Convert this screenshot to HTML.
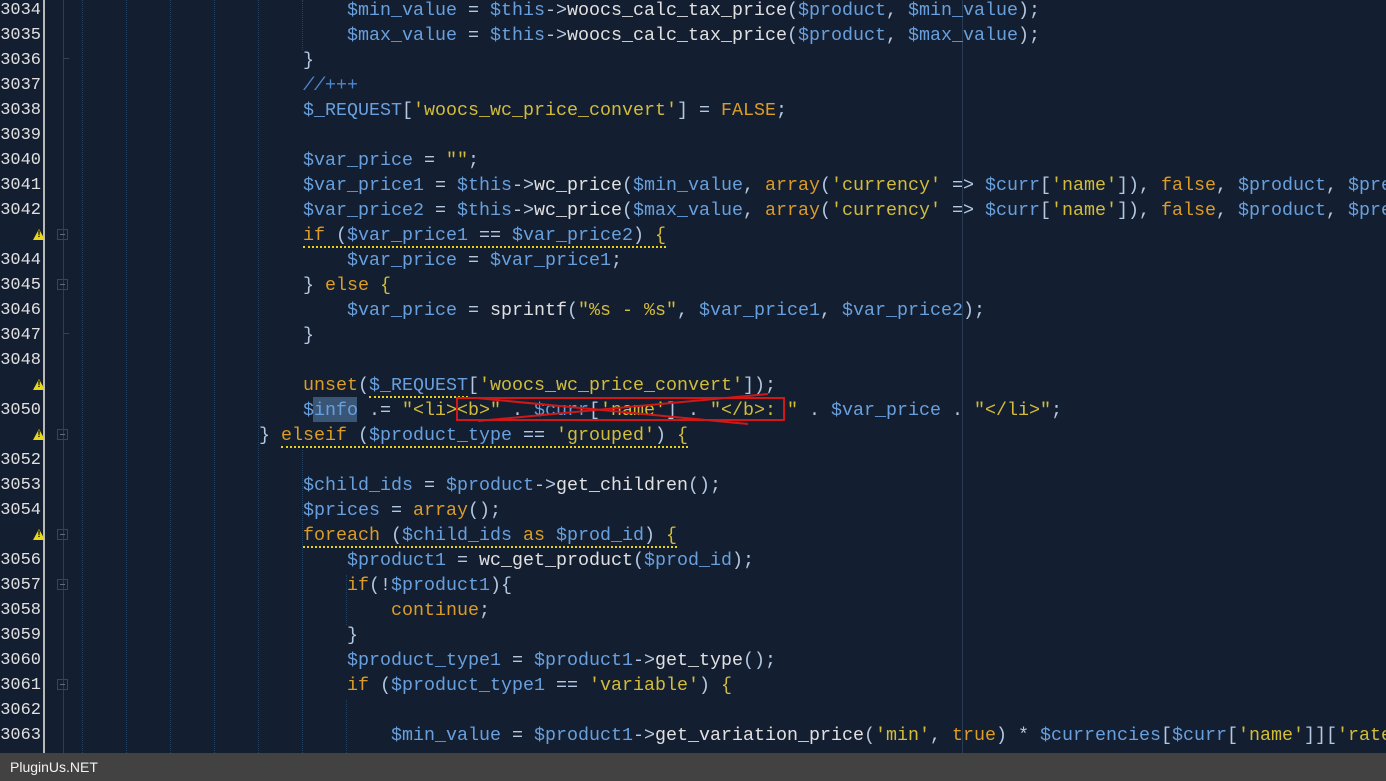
<!DOCTYPE html>
<html><head><meta charset="utf-8"><style>
body{margin:0;width:1386px;height:781px;overflow:hidden;background:#131e30;position:relative;font-family:"Liberation Mono","Courier New",monospace}
.ln{position:absolute;left:0;width:41px;text-align:right;color:#e0e0e0;font-size:17px;line-height:25px}
.code{position:absolute;left:83px;white-space:pre;font-size:18.33px;line-height:25px;color:#e0e0e0}
.v{color:#68a0de}.k{color:#dc9c26}.s{color:#d2bc3a}.p{color:#b4c8e2}.c{color:#4f86d0;font-style:italic}
.w{border-bottom:2px dotted #e8d020}
.g{position:absolute;top:0;height:753px;border-left:1px dotted #26405f}
.warn{position:absolute;left:33px;width:12px;height:11px;background:#e8d818;color:#000;font:bold 9px/11px "Liberation Sans",sans-serif;text-align:center;clip-path:polygon(50% 0,100% 100%,0 100%)}
.fold{position:absolute;left:57px;width:11px;height:11px;border:1px solid #34465f;box-sizing:border-box}
.fold:after{content:"";position:absolute;left:2px;top:4px;width:5px;height:1px;background:#5a6e8a}
.tick{position:absolute;left:63px;width:6px;height:1px;background:#34465f}
</style></head><body>
<div style="position:absolute;left:43px;top:0;width:2px;height:753px;background:#b8b8b8"></div>
<div style="position:absolute;left:63px;top:0;width:1px;height:753px;background:#2c3d55"></div>
<div class="g" style="left:82px"></div><div class="g" style="left:126px"></div><div class="g" style="left:170px"></div><div class="g" style="left:214px"></div><div class="g" style="left:258px"></div>
<div class="g" style="left:302px;top:0;height:50px"></div><div class="g" style="left:302px;top:450px;height:303px"></div>
<div class="g" style="left:346px;top:575px;height:50px"></div><div class="g" style="left:346px;top:700px;height:53px"></div>
<div class="g" style="left:962px;border-left:1px solid #2a3b55"></div>

<div class="ln" style="top:-2.5px">3034<br>3035<br>3036<br>3037<br>3038<br>3039<br>3040<br>3041<br>3042<br>&nbsp;<br>3044<br>3045<br>3046<br>3047<br>3048<br>&nbsp;<br>3050<br>&nbsp;<br>3052<br>3053<br>3054<br>&nbsp;<br>3056<br>3057<br>3058<br>3059<br>3060<br>3061<br>3062<br>3063</div>
<div class="warn" style="top:229px">!</div><div class="warn" style="top:379px">!</div><div class="warn" style="top:429px">!</div><div class="warn" style="top:529px">!</div>
<div class="fold" style="top:229px"></div><div class="fold" style="top:279px"></div><div class="fold" style="top:429px"></div><div class="fold" style="top:529px"></div><div class="fold" style="top:579px"></div><div class="fold" style="top:679px"></div>
<div class="tick" style="top:58px"></div><div class="tick" style="top:333px"></div>

<div style="position:absolute;left:313px;top:397px;width:44px;height:25px;background:#3a5676"></div>

<div class="code" style="top:-2.5px"><span>                        <span class="v">$min_value</span> <span class="p">=</span> <span class="v">$this</span><span class="p">-&gt;</span>woocs_calc_tax_price<span class="p">(</span><span class="v">$product</span><span class="p">,</span> <span class="v">$min_value</span><span class="p">);</span></span>
                        <span class="v">$max_value</span> <span class="p">=</span> <span class="v">$this</span><span class="p">-&gt;</span>woocs_calc_tax_price<span class="p">(</span><span class="v">$product</span><span class="p">,</span> <span class="v">$max_value</span><span class="p">);</span>
                    <span class="p">}</span>
                    <span class="c">//+++</span>
                    <span class="v">$_REQUEST</span><span class="p">[</span><span class="s">'woocs_wc_price_convert'</span><span class="p">]</span> <span class="p">=</span> <span class="k">FALSE</span><span class="p">;</span>

                    <span class="v">$var_price</span> <span class="p">=</span> <span class="s">""</span><span class="p">;</span>
                    <span class="v">$var_price1</span> <span class="p">=</span> <span class="v">$this</span><span class="p">-&gt;</span>wc_price<span class="p">(</span><span class="v">$min_value</span><span class="p">,</span> <span class="k">array</span><span class="p">(</span><span class="s">'currency'</span> <span class="p">=&gt;</span> <span class="v">$curr</span><span class="p">[</span><span class="s">'name'</span><span class="p">]),</span> <span class="k">false</span><span class="p">,</span> <span class="v">$product</span><span class="p">,</span> <span class="v">$pre</span>
                    <span class="v">$var_price2</span> <span class="p">=</span> <span class="v">$this</span><span class="p">-&gt;</span>wc_price<span class="p">(</span><span class="v">$max_value</span><span class="p">,</span> <span class="k">array</span><span class="p">(</span><span class="s">'currency'</span> <span class="p">=&gt;</span> <span class="v">$curr</span><span class="p">[</span><span class="s">'name'</span><span class="p">]),</span> <span class="k">false</span><span class="p">,</span> <span class="v">$product</span><span class="p">,</span> <span class="v">$pre</span>
                    <span class="w"><span class="k">if</span> <span class="p">(</span><span class="v">$var_price1</span> <span class="p">==</span> <span class="v">$var_price2</span><span class="p">)</span> <span class="s">{</span></span>
                        <span class="v">$var_price</span> <span class="p">=</span> <span class="v">$var_price1</span><span class="p">;</span>
                    <span class="p">}</span> <span class="k">else</span> <span class="s">{</span>
                        <span class="v">$var_price</span> <span class="p">=</span> sprintf<span class="p">(</span><span class="s">"%s - %s"</span><span class="p">,</span> <span class="v">$var_price1</span><span class="p">,</span> <span class="v">$var_price2</span><span class="p">);</span>
                    <span class="p">}</span>

                    <span class="k">unset</span><span class="p">(</span><span class="w"><span class="v">$_REQUEST</span></span><span class="p">[</span><span class="s">'woocs_wc_price_convert'</span><span class="p">]);</span>
                    <span class="v">$info</span> <span class="p">.=</span> <span class="s">"&lt;li&gt;&lt;b&gt;"</span> <span class="p">.</span> <span class="v">$curr</span><span class="p">[</span><span class="s">'name'</span><span class="p">]</span> <span class="p">.</span> <span class="s">"&lt;/b&gt;: "</span> <span class="p">.</span> <span class="v">$var_price</span> <span class="p">.</span> <span class="s">"&lt;/li&gt;"</span><span class="p">;</span>
                <span class="p">}</span> <span class="w"><span class="k">elseif</span> <span class="p">(</span><span class="v">$product_type</span> <span class="p">==</span> <span class="s">'grouped'</span><span class="p">)</span> <span class="s">{</span></span>

                    <span class="v">$child_ids</span> <span class="p">=</span> <span class="v">$product</span><span class="p">-&gt;</span>get_children<span class="p">();</span>
                    <span class="v">$prices</span> <span class="p">=</span> <span class="k">array</span><span class="p">();</span>
                    <span class="w"><span class="k">foreach</span> <span class="p">(</span><span class="v">$child_ids</span> <span class="k">as</span> <span class="v">$prod_id</span><span class="p">)</span> <span class="s">{</span></span>
                        <span class="v">$product1</span> <span class="p">=</span> wc_get_product<span class="p">(</span><span class="v">$prod_id</span><span class="p">);</span>
                        <span class="k">if</span><span class="p">(!</span><span class="v">$product1</span><span class="p">){</span>
                            <span class="k">continue</span><span class="p">;</span>
                        <span class="p">}</span>
                        <span class="v">$product_type1</span> <span class="p">=</span> <span class="v">$product1</span><span class="p">-&gt;</span>get_type<span class="p">();</span>
                        <span class="k">if</span> <span class="p">(</span><span class="v">$product_type1</span> <span class="p">==</span> <span class="s">'variable'</span><span class="p">)</span> <span class="s">{</span>

                            <span class="v">$min_value</span> <span class="p">=</span> <span class="v">$product1</span><span class="p">-&gt;</span>get_variation_price<span class="p">(</span><span class="s">'min'</span><span class="p">,</span> <span class="k">true</span><span class="p">)</span> <span class="p">*</span> <span class="v">$currencies</span><span class="p">[</span><span class="v">$curr</span><span class="p">[</span><span class="s">'name'</span><span class="p">]][</span><span class="s">'rate</span></div>

<div style="position:absolute;left:456px;top:397px;width:329px;height:24px;border:2px solid #d01818;box-sizing:border-box"></div>
<svg style="position:absolute;left:0;top:0" width="1386" height="781"><path d="M476 398 L748 424" stroke="#d01818" stroke-width="2"/><path d="M478 421 L768 394" stroke="#d01818" stroke-width="2"/></svg>

<div style="position:absolute;left:0;top:753px;width:1386px;height:28px;background:#424242;color:#f2f2f2;font-family:'Liberation Sans',sans-serif;font-size:14px;line-height:28px;padding-left:10px">PluginUs.NET</div>
</body></html>
